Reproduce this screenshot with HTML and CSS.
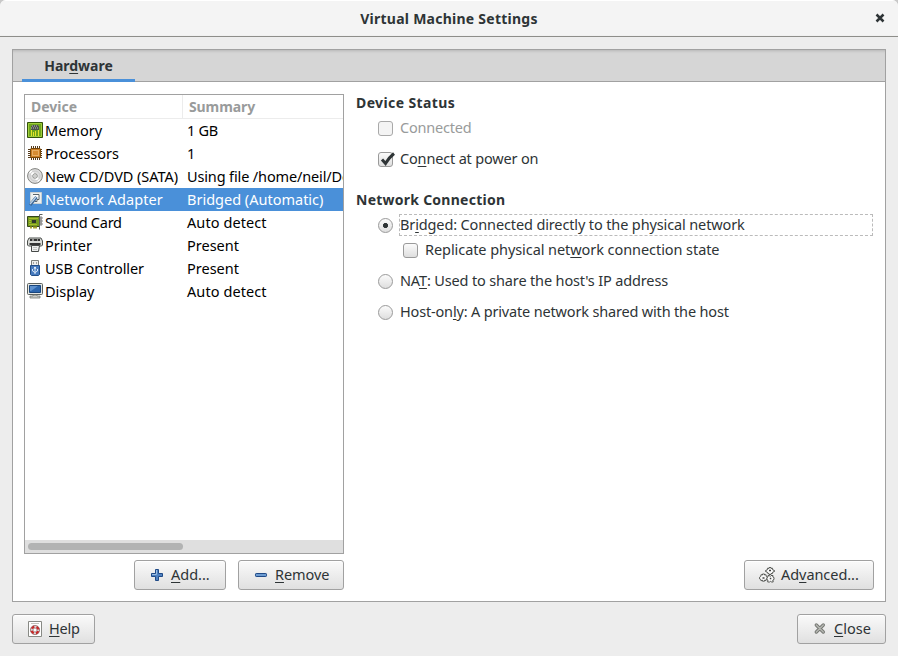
FILE: index.html
```html
<!DOCTYPE html>
<html lang="en">
<head>
<meta charset="utf-8">
<title>Virtual Machine Settings</title>
<link rel="stylesheet" href="styles.css">
</head>
<body>
<div class="window">
  <header class="titlebar">
    <span></span>
    <h1>Virtual Machine Settings</h1>
    <svg class="close-x" width="10" height="10" viewBox="0 0 10 10"><path d="M1.500 1.500l7 7M8.500 1.500l-7 7" stroke="#2e3436" stroke-width="2.500" fill="none"/></svg>
  </header>
  <main class="notebook">
    <nav class="tabs"><div class="tab"><span class="tab-text">Har<u>d</u>ware</span></div></nav>
    <div class="page">
      <section class="left">
        <div class="list">
          <div class="row head"><span class="c1">Device</span><span class="c2 t-sum">Summary</span></div>
          <div class="row"><svg viewBox="0 0 16 16"><path d="M.5.5h15v15H.5z" fill="#6ea51d" stroke="#34530c"/><path d="M1.500 1.500h13v13h-13z" fill="none" stroke="#a0cf3b"/><path d="M5 3h6v1h1v4H4V4h1z" fill="#4b504b"/><path d="M5 4h1M7 4h1M9 4h1M4 6h1M6 6h1M8 6h1M10 6h1" stroke="#c1c5bd"/><path d="M4.500 8v6M6.500 10v4M8.500 9v5M11.500 8v6" stroke="#e5e32b"/></svg><span class="c1">Memory</span><span class="c2 t-gb">1 GB</span></div>
          <div class="row"><svg viewBox="0 0 16 16"><path d="M4.500 1v14M6.500 1v14M8.500 1v14M10.500 1v14M12.500 1v14M1 4.500h14M1 6.500h14M1 8.500h14M1 10.500h14M1 12.500h14" stroke="#573c1c"/><rect x="3.500" y="3.500" width="10" height="9" rx="1" fill="#c87d25" stroke="#754609"/><rect x="5.500" y="5.500" width="6" height="5" fill="#d68c32" stroke="#e7ae64"/></svg><span class="c1">Processors</span><span class="c2">1</span></div>
          <div class="row"><svg viewBox="0 0 16 16"><circle cx="8" cy="8" r="7.400" fill="#dedede" stroke="#80827e"/><path d="M3 3.500l3.500 3M9 10l3 3" stroke="#fff" stroke-width="3"/><circle cx="8" cy="8" r="5" fill="none" stroke="#cacaca"/><circle cx="8" cy="8" r="2.200" fill="#fff" stroke="#898b87"/><circle cx="8" cy="8" r=".7" fill="#777"/></svg><span class="c1 t-cd">New CD/DVD (SATA)</span><span class="c2 t-file">Using file /home/neil/Documents</span></div>
          <div class="row selected"><svg viewBox="0 0 16 16"><path d="M3.500 1.500h11v11h-11z" fill="#edf0ee" stroke="#c9d0d3"/><path d="M6 3.500h6v5h-2v2H8" fill="#fff" stroke="#59646b"/><path d="M9.500 6L3 14" stroke="#3c6796" stroke-width="3"/><path d="M9 6L3 13" stroke="#bdd3e8" stroke-width="1.300"/></svg><span class="c1 t-net">Network Adapter</span><span class="c2">Bridged (Automatic)</span></div>
          <div class="row"><svg viewBox="0 0 16 16"><path d="M.5 2.500h12v10H.5z" fill="#759b20" stroke="#34451a"/><path d="M2 4.500h9M2 6.500h2M2 8.500h2M2 10.500h8" stroke="#a8bd2b"/><path d="M5 6h4v3H5z" fill="#30382c"/><path d="M3 13.500h2M6 13.500h4" stroke="#a7a530" stroke-width="2"/><path d="M15.500.5h-3v15" fill="none" stroke="#5b605c"/><path d="M13 3h2v2h-2zM13 6h2v2h-2zM13 9h2v2h-2z" fill="#eee" stroke="#666" stroke-width=".8"/></svg><span class="c1 t-snd">Sound Card</span><span class="c2 t-det">Auto detect</span></div>
          <div class="row"><svg viewBox="0 0 16 16"><path d="M2 1h12l1.500 3v4l-1 1h-13l-1-1V4z" fill="#d9dad7" stroke="#4b4f4c"/><path d="M3 3h10" stroke="#333" stroke-width="2"/><path d="M5 3h2M10 3h1" stroke="#eee"/><path d="M2.500 7h11" stroke="#333" stroke-width="2"/><path d="M4.500 8.500h8l-1 6h-7z" fill="#eee" stroke="#454846"/><path d="M6 10.500h4M6 12.500h4" stroke="#c0c2bf"/></svg><span class="c1 t-prn">Printer</span><span class="c2 t-pres">Present</span></div>
          <div class="row"><svg viewBox="0 0 16 16"><path d="M4.500.5h7v5h-7z" fill="#eeeeec" stroke="#7b7e7a"/><path d="M6 3h1M9 3h1" stroke="#555"/><path d="M3.500 5.500h9v9l-1 1h-7l-1-1z" fill="#467abe" stroke="#214d86"/><path d="M8 7v7M5.500 9v2L8 12.500 10.500 11V9" fill="none" stroke="#d8e6f5"/><path d="M6.500 8.500L8 6.500l1.500 2z" fill="#fff"/></svg><span class="c1 t-usb">USB Controller</span><span class="c2 t-pres">Present</span></div>
          <div class="row"><svg viewBox="0 0 16 16"><rect x=".5" y=".5" width="15" height="11" rx="1" fill="#e5e7e3" stroke="#5b605d"/><path d="M2.500 2.500h11v7h-11z" fill="#2c66ae" stroke="#19457c"/><path d="M3 3h8L4 8H3z" fill="#5e91ce"/><path d="M6 12h4v1h3v2H3v-2h3z" fill="#c8cac6" stroke="#777b77" stroke-width=".8"/></svg><span class="c1">Display</span><span class="c2 t-det">Auto detect</span></div>
          <div class="blank"></div>
          <div class="scroll"><div class="thumb"></div></div>
        </div>
        <div class="actions">
          <button class="add"><svg viewBox="0 0 16 16"><path d="M6.500 2.500h3v4h4v3h-4v4h-3v-4h-4v-3h4z" fill="#4f82c2" stroke="#204a87" stroke-linejoin="round"/><path d="M7.500 3v4.500H3" fill="none" stroke="#9bbce0"/></svg><span><u>A</u>dd...</span></button>
          <button class="remove"><svg viewBox="0 0 16 16"><rect x="2.500" y="6.500" width="11" height="3" rx=".7" fill="#6c9bd1" stroke="#204a87"/></svg><span><u>R</u>emove</span></button>
        </div>
      </section>
      <section class="right">
        <h2 class="h-status">Device Status</h2>
        <label class="opt disabled"><i class="box"></i><span class="txt o-con">Connected</span></label>
        <label class="opt power"><i class="box"><svg viewBox="0 0 15 15"><path d="M3 7.500l3.500 4Q9.500 6 15 1.500" fill="none" stroke="#2e3436" stroke-width="3"/></svg></i><span class="txt o-pow">Co<u>n</u>nect at power on</span></label>
        <h2 class="h-net">Network Connection</h2>
        <label class="opt bridged"><i class="box radio on"></i><span class="focus"><span class="o-bri">Br<u>i</u>dged: Connected directly to the physical network</span></span></label>
        <label class="opt replicate"><i class="box"></i><span class="txt o-rep">Replicate physical net<u>w</u>ork connection state</span></label>
        <label class="opt nat"><i class="box radio"></i><span class="txt o-nat">NA<u>T</u>: Used to share the host's IP address</span></label>
        <label class="opt host"><i class="box radio"></i><span class="txt o-host">Host-on<u>l</u>y: A private network shared with the host</span></label>
        <button class="advanced"><svg viewBox="0 0 16 16"><g fill="#fafafa" stroke="#4a4c48" stroke-width=".9" stroke-linejoin="round"><path d="M10 .5h2v1l1.500-.3.300 1.800 1.700.5v1l-1.700.5-.3 1.500L12 6.500v1h-2v-1l-1.500-.3L8.200 5l-1.700-.5v-1L8.200 3l.3-1.800 1.500.3z"/><path d="M3.500 7h2v1l1.500-.3.300 1.800 1.200.5v1.500l-1.200.5-.3 1.500-1.500-.3v1h-2v-1L2 13.800l-.3-1.500L.5 11.800v-1.500l1.200-.8L2 7.700l1.500.3z"/><path d="M9 8.500h1.500l.7 1 .8-1h2l-.2 1.500 1.200.5v2l-1.200.5.4 2h-2l-.7-.8-1 .8H8.700l.2-2-1-.5v-2l1.100-.5z"/></g><path d="M10 3.500h2M3.500 11h2M10.800 11.500h1.500" stroke="#444" stroke-width="1.600"/></svg><span>Ad<u>v</u>anced...</span></button>
      </section>
    </div>
  </main>
  <footer>
    <button class="help"><svg viewBox="0 0 16 16"><path d="M1.500.5h13v15h-13z" fill="#fff" stroke="#888a85"/><path d="M4 2.500h8" stroke="#c3c5c0"/><circle cx="8" cy="9" r="3.500" fill="none" stroke="#d8d8d8" stroke-width="2.500"/><circle cx="8" cy="9" r="3.500" fill="none" stroke="#cf2525" stroke-width="2.300" stroke-dasharray="3.200 2.300" stroke-dashoffset="-1.150"/><circle cx="8" cy="9" r="4.600" fill="none" stroke="#8d5959" stroke-width=".7"/><circle cx="8" cy="9" r="2" fill="none" stroke="#8d5959" stroke-width=".7"/></svg><span><u>H</u>elp</span></button>
    <button class="close"><svg viewBox="0 0 16 16"><path d="M4.300 4l7 7M11.300 4l-7 7" stroke="#777975" stroke-width="3.400" stroke-linecap="round"/><path d="M4.300 4l7 7M11.300 4l-7 7" stroke="#b5b7b2" stroke-width="1.400" stroke-linecap="round"/></svg><span><u>C</u>lose</span></button>
  </footer>
</div>
</body>
</html>
```

FILE: styles.css
```css
* { box-sizing: border-box; }
body { margin: 0; background: #c8c8c8; font: 14.500px/20px "Noto Sans", "Open Sans", sans-serif; color: #2e3436; }
h1, h2 { margin: 0; font-size: 14px; line-height: 20px; font-weight: 700; white-space: nowrap; letter-spacing: .25px; }
u { text-decoration: underline; text-decoration-thickness: 1px; text-underline-offset: 2px; text-decoration-skip-ink: none; }
.window { width: 898px; height: 656px; display: flex; flex-direction: column; background: #ededed; border-radius: 6px 6px 0 0; overflow: hidden; }
.titlebar { height: 37px; flex: none; display: grid; grid-template-columns: 1fr auto 1fr; align-items: center; background: linear-gradient(#f4f4f4 0, #f4f4f4 34px, #e6e6e6 36px); border-top: 1px solid #fff; border-bottom: 1px solid #8e8e8a; }
.close-x { justify-self: end; margin: -2px 13px 0 0; }
.notebook { margin: 12px 12px 0; height: 553px; border: 1px solid #a1a1a1; background: #fff; display: flex; flex-direction: column; }
.tabs { height: 32px; flex: none; background: #d6d6d6; border-bottom: 1px solid #a1a1a1; box-shadow: inset 0 3px 3px -2px #b5b5b5; padding-left: 9px; }
.tab { width: 113px; height: 32px; border-bottom: 3px solid #4a90d9; font-weight: 700; font-size: 14px; line-height: 32px; text-align: center; position: relative; }
.page { flex: 1; display: flex; padding: 12px 11px 11px; gap: 12px; }
.left { width: 320px; flex: none; }
.list { height: 460px; border: 1px solid #a1a1a1; display: flex; flex-direction: column; color: #000; }
.row { height: 23px; flex: none; display: flex; align-items: center; white-space: nowrap; padding-left: 2px; overflow: hidden; }
.row svg { width: 16px; height: 16px; flex: none; margin: -1px 2px 0 0; }
.row span { padding-bottom: 2px; }
.c1 { width: 142px; flex: none; }
.row.head { height: 24px; color: #999b9b; font-weight: 700; font-size: 14px; border-bottom: 1px solid #ececec; padding-left: 6px; }
.head .c1 { width: 152px; height: 23px; line-height: 23px; border-right: 1px solid #ececec; }
.row.head span { padding-bottom: 0; }
.head .c2 { margin-left: 6px; }
.t-sum { letter-spacing: -.1px; }
.t-gb { letter-spacing: -.3px; }
.t-cd { letter-spacing: -.06px; }
.t-file { letter-spacing: -.14px; }
.t-net { letter-spacing: .07px; }
.t-snd { letter-spacing: -.25px; }
.t-det { letter-spacing: .08px; }
.t-usb { letter-spacing: -.07px; }
.selected { background: #4a90d9; color: #fff; }
.blank { flex: 1; }
.scroll { height: 13px; background: #dfdfdf; padding: 3px; }
.thumb { width: 155px; height: 7px; border-radius: 4px; background: #b2b3b3; }
button { height: 30px; border: 1px solid #a1a1a1; border-radius: 3px; background: linear-gradient(#fafafa, #e0e0e0); box-shadow: inset 0 1px #fff; font: inherit; color: inherit; padding: 0 0 0 14px; display: flex; align-items: center; gap: 6px; white-space: nowrap; }
button svg { width: 16px; height: 16px; flex: none; margin-top: -1px; }
button span { padding-bottom: 2px; }
.actions { display: flex; justify-content: flex-end; gap: 12px; margin-top: 6px; }
.add { width: 92px; }
.remove { width: 106px; letter-spacing: -.06px; }
.advanced { width: 130px; margin: auto 0 0 auto; letter-spacing: -.06px; }
.help { width: 83px; letter-spacing: -.2px; }
.close { width: 89px; }
.right { flex: 1; display: flex; flex-direction: column; }
.h-status { margin-top: -1px; letter-spacing: .38px; }
.opt { height: 22px; margin-left: 22px; display: flex; align-items: center; gap: 7px; white-space: nowrap; }
.txt { padding-bottom: 2px; }
.disabled { margin-top: 4px; color: #999b9b; }
.power { margin-top: 9px; }
.h-net { margin-top: 20px; }
.bridged { margin: 4px 1px 0 22px; gap: 6px; }
.replicate { margin: 3px 0 0 47px; }
.nat { margin-top: 9px; }
.host { margin-top: 9px; }
.o-con { letter-spacing: -.2px; }
.o-pow { letter-spacing: -.17px; }
.o-bri { letter-spacing: -.13px; }
.o-rep { letter-spacing: -.07px; }
.o-nat { letter-spacing: -.15px; }
.o-host { letter-spacing: -.17px; }
.box { width: 15px; height: 15px; flex: none; border: 1px solid #9a9a9a; border-radius: 3px; background: linear-gradient(#fbfbfb, #dedede); display: block; margin-top: 1px; }
.disabled .box { background: #f4f4f4; border-color: #a9a9a9; }
.box svg { display: block; width: 15px; height: 15px; margin-top: -1px; overflow: visible; }
.radio { border-radius: 50%; }
.on { background: radial-gradient(circle, #2e3436 2.200px, transparent 2.900px), linear-gradient(#fbfbfb, #dedede); }
.focus { flex: 1; height: 22px; line-height: 18px; border: 1px dashed #bbb; }
footer { flex: none; display: flex; justify-content: space-between; padding: 12px 12px 0; }
```
